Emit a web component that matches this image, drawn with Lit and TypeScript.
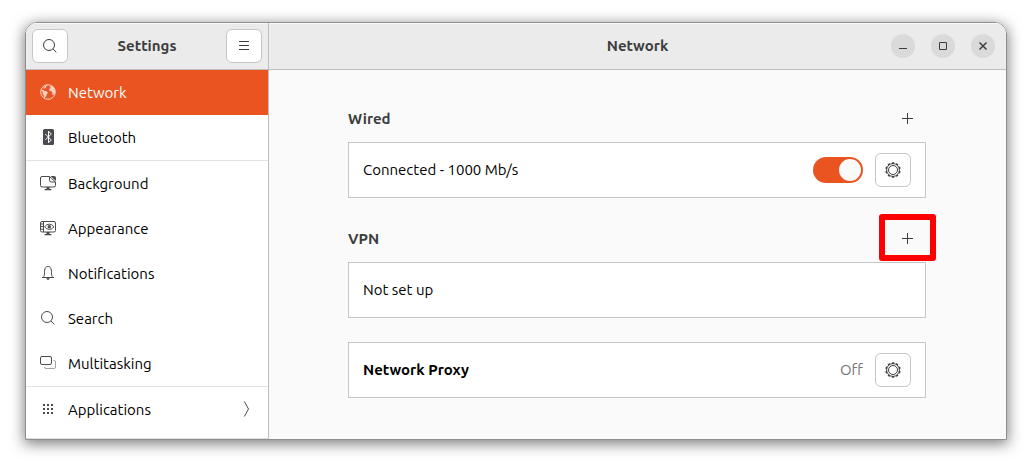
import { LitElement, html, css, svg, nothing, type TemplateResult } from "lit";
import { customElement, property, state } from "lit/decorators.js";
import { classMap } from "lit/directives/class-map.js";

const gearTeeth = Array.from({ length: 10 }, (_, i) => i * 36);

const icons: Record<string, TemplateResult> = {
  search: svg`<circle cx="7" cy="7" r="5.5"/><path d="m11 11 3.300 3.300"/>`,
  menu: svg`<path d="M3 3.5h10M3 7.5h10M3 11.5h10"/>`,
  network: svg`<circle cx="8" cy="8" r="7.3"/>
    <path class="fill" d="M4 2.200 2.6 3 1 6.200l1.300-.4 1.200.3 1.300 1.200 1.800.3.600 1.100-.8 1.400-.5 1.500-.8 2 .1.600-1.300-.6-.3-2.600-1.100-1.400.3-1.500L1 6.600l.5-2.200z"/>
    <path class="fill" d="M4 7.200 5.400 7l1.600.7.9 1-.9 1.300-.6 1.800-.8 1.200-.6-.4-.1-2.100L3.800 9zM5 1.500l2.500-.8L7.300 2l-1.200.6-.3 1.100-1 .2-.6 1-.8-.6zM9.200 3.200l1.200-1 .7-1 2.200 1.600 1.600 2.500.3 2.900-.9 2.400-1.300.7-.8-1.300.2-1.600-.9-1.200-1.700-.1-.8-1.300.6-1.300 1.300-.4-.6-.8z"/>`,
  bluetooth: svg`<rect class="fill" x="3" y="0" width="11" height="16" rx="1.500"/>
    <path class="light" d="m5.300 5 6 6-2.800 2.800V2.200L11.300 5l-6 6"/>`,
  background: svg`<path d="M9.500 1.500H2A1.500 1.500 0 0 0 .5 3v7.500A1.500 1.500 0 0 0 2 12h12a1.500 1.500 0 0 0 1.500-1.500V7"/>
    <path d="M9.500 1.500v3.500q0 2 2 2h4z"/>
    <path class="fill" d="M10.500 1H14a2 2 0 0 1 2 2v3zM6.500 12h3v2H11q.6 0 .6 1.200H4.400Q4.400 14 5 14h1.500z"/>`,
  appearance: svg`<rect x=".5" y="1.500" width="15" height="10.500" rx="1.500"/>
    <path d="M3.500 1.500V12M.5 4h3M.5 6.500h3M.5 9.200h3"/>
    <path d="M4.600 6.800q2-2.700 4.700-2.700T14 6.800q-2 2.600-4.700 2.600T4.600 6.800z"/>
    <circle class="fill" cx="9.300" cy="6.700" r="1.700"/>
    <path class="fill" d="M6.500 12h3v2H11q.6 0 .6 1.200H4.400Q4.400 14 5 14h1.500z"/>`,
  notifications: svg`<path d="M2 12.500h12M3 12.300c1.300-1 1.500-2.500 1.500-4.800 0-3.800 1-6 3.500-6s3.500 2.200 3.500 6c0 2.300.2 3.800 1.500 4.800"/>
    <path class="fill" d="M6.200 13.300h3.600Q9.500 15 8 15t-1.800-1.700z"/>`,
  multitasking: svg`<path class="faint" d="M13.500 5.500H14A1.500 1.500 0 0 1 15.500 7v5A1.500 1.500 0 0 1 14 13.500H6A1.500 1.500 0 0 1 4.500 12"/>
    <rect x=".5" y="1.500" width="11" height="8" rx="1.500"/>`,
  applications: svg`<path class="fill" d="M3 3h2v2H3zM7 3h2v2H7zM11 3h2v2h-2zM3 7h2v2H3zM7 7h2v2H7zM11 7h2v2h-2zM3 11h2v2H3zM7 11h2v2H7zM11 11h2v2h-2z"/>`,
  chevron: svg`<path d="m6.300.5 4.200 7.500-4.200 7.500"/>`,
  plus: svg`<path d="M7.500 2v11M2 7.500h11"/>`,
  gear: svg`<circle cx="8" cy="8" r="6.400"/><circle cx="8" cy="8" r="4.500"/>
    ${gearTeeth.map((a) => svg`<path class="tooth" transform="rotate(${a} 8 8)" d="M6.900 1h2.200"/>`)}`,
  minimize: svg`<path d="M4 10.500h8"/>`,
  maximize: svg`<path d="M4.500 4.500h7v7h-7z"/>`,
  close: svg`<path class="bold" d="m4.500 4.500 7 7M11.500 4.500l-7 7"/>`,
};

@customElement("ui-icon")
export class UiIcon extends LitElement {
  static styles = css`
    :host { display: block; flex: none; width: 16px; height: 16px; }
    svg { display: block; fill: none; stroke: currentColor; stroke-width: 1; }
    .fill { fill: currentColor; stroke: none; }
    .light { stroke: #fff; }
    .faint { opacity: 0.5; }
    .tooth { stroke-width: 1.4; }
    .bold { stroke-width: 1.5; }
  `;
  @property() name = "";
  render() {
    return html`<svg width="16" height="16" viewBox="0 0 16 16" aria-hidden="true">${icons[this.name]}</svg>`;
  }
}

interface Panel {
  id: string;
  label: string;
  startsGroup?: boolean;
  submenu?: boolean;
}

const panels: Panel[] = [
  { id: "network", label: "Network" },
  { id: "bluetooth", label: "Bluetooth" },
  { id: "background", label: "Background", startsGroup: true },
  { id: "appearance", label: "Appearance" },
  { id: "notifications", label: "Notifications" },
  { id: "search", label: "Search" },
  { id: "multitasking", label: "Multitasking" },
  { id: "applications", label: "Applications", startsGroup: true, submenu: true },
];

@customElement("app-root")
export class AppRoot extends LitElement {
  static styles = css`
    :host {
      display: flex;
      box-sizing: border-box;
      min-height: 100vh;
      padding: 22px 25px 28px;
      background: #fff;
      color: #000;
      font: 15px/16px Ubuntu, "Noto Sans", sans-serif;
    }
    * { box-sizing: border-box; }
    button { font: inherit; color: #3d3d3d; padding: 0; border: 0; background: none; display: grid; place-items: center; }
    h1, h2, ul { margin: 0; padding: 0; font-size: inherit; list-style: none; }
    .window {
      flex: 1;
      display: grid;
      grid-template-columns: 242px minmax(0, 1fr);
      grid-template-rows: auto 1fr;
      border: 1px solid #8f8f8f;
      border-radius: 12px 12px 0 0;
      overflow: hidden;
      box-shadow: 0 3px 14px 1px rgba(0, 0, 0, 0.5);
    }
    .bar {
      display: grid;
      align-items: center;
      height: 47px;
      background: #ebebeb;
      border-bottom: 1px solid #bfbfbf;
      box-shadow: inset 0 1px #f8f8f8;
      color: #3d3d3d;
      text-align: center;
    }
    .bar-side { grid-template-columns: 36px 1fr 36px; padding: 0 6px; }
    .bar-main { grid-template-columns: 1fr auto 1fr; border-left: 1px solid #bfbfbf; padding: 0 11px; }
    .controls { grid-column: 3; justify-self: end; display: flex; gap: 16px; }
    .control { width: 24px; height: 24px; border-radius: 50%; background: #dadada; }
    .title { grid-column: 2; font-weight: 700; }
    .tool { width: 36px; height: 34px; border: 1px solid #c6c6c6; border-radius: 6px; background: #fff; }
    .side { background: #fff; border-bottom: 1px solid #dedede; }
    .group { border-top: 1px solid #e2e2e2; }
    .link { display: flex; gap: 12px; padding: 14px 14px 15px; color: #000; text-decoration: none; }
    .link ui-icon { color: #4a4a4f; }
    .label { flex: 1; padding-top: 1px; margin-bottom: -1px; }
    .active { background: #e95420; color: #fff; }
    .active ui-icon { color: #f9cfc0; }
    .main { background: #fafafa; border-left: 1px solid #bfbfbf; padding: 26px 25px 40px 24px; }
    .column { max-width: 578px; margin: 0 auto; }
    .heading { display: flex; align-items: center; justify-content: space-between; height: 46px; color: #3d3d3d; }
    .section + .section { margin-top: 18px; }
    .section + .card { margin-top: 24px; }
    .add { position: relative; width: 36px; height: 36px; }
    .marked::after {
      content: "";
      position: absolute;
      inset: -7px -10px -4px -11px;
      border: 6px solid #f00;
      border-radius: 3px;
      pointer-events: none;
    }
    .card { display: flex; align-items: center; gap: 12px; height: 56px; padding: 0 14px; border: 1px solid #c6c6c6; background: #fff; }
    .name { flex: 1; }
    .strong { font-weight: 700; }
    .status { color: #777; }
    .switch { appearance: none; margin: 0; width: 50px; height: 26px; padding: 2px; border-radius: 13px; background: #e95420; display: flex; justify-content: flex-end; }
    .switch::before { content: ""; width: 22px; height: 22px; border-radius: 50%; background: #fafafa; }
    .switch:not(:checked) { background: #cfcfcf; justify-content: flex-start; }
  `;

  @state() private panel = "network";
  @state() private wired = true;

  private link(p: Panel) {
    const active = p.id === this.panel;
    return html`<li class=${classMap({ group: !!p.startsGroup })}>
      <a class=${classMap({ link: true, active })} href="#${p.id}" aria-current=${active ? "page" : nothing}
        @click=${() => (this.panel = p.id)}>
        <ui-icon name=${p.id}></ui-icon><span class="label">${p.label}</span>
        ${p.submenu ? html`<ui-icon name="chevron"></ui-icon>` : nothing}
      </a>
    </li>`;
  }

  render() {
    return html`<div class="window">
      <header class="bar bar-side">
        <button class="tool" aria-label="Search"><ui-icon name="search"></ui-icon></button>
        <h1 class="title">Settings</h1>
        <button class="tool" aria-label="Menu"><ui-icon name="menu"></ui-icon></button>
      </header>
      <header class="bar bar-main">
        <h1 class="title">Network</h1>
        <div class="controls">
          ${["minimize", "maximize", "close"].map(
            (n) => html`<button class="control" aria-label=${n}><ui-icon name=${n}></ui-icon></button>`
          )}
        </div>
      </header>
      <nav class="side"><ul>${panels.map((p) => this.link(p))}</ul></nav>
      <main class="main">
        <div class="column">
          <section class="section">
            <div class="heading">
              <h2>Wired</h2>
              <button class="add" aria-label="Add wired connection"><ui-icon name="plus"></ui-icon></button>
            </div>
            <div class="card">
              <label class="name" for="wired">Connected - 1000 Mb/s</label>
              <input class="switch" id="wired" type="checkbox" role="switch" .checked=${this.wired}
                @change=${() => (this.wired = !this.wired)} />
              <button class="tool" aria-label="Wired options"><ui-icon name="gear"></ui-icon></button>
            </div>
          </section>
          <section class="section">
            <div class="heading">
              <h2>VPN</h2>
              <button class="add marked" aria-label="Add VPN"><ui-icon name="plus"></ui-icon></button>
            </div>
            <div class="card"><span class="name">Not set up</span></div>
          </section>
          <section class="card">
            <h2 class="name strong">Network Proxy</h2>
            <span class="status">Off</span>
            <button class="tool" aria-label="Proxy options"><ui-icon name="gear"></ui-icon></button>
          </section>
        </div>
      </main>
    </div>`;
  }
}
